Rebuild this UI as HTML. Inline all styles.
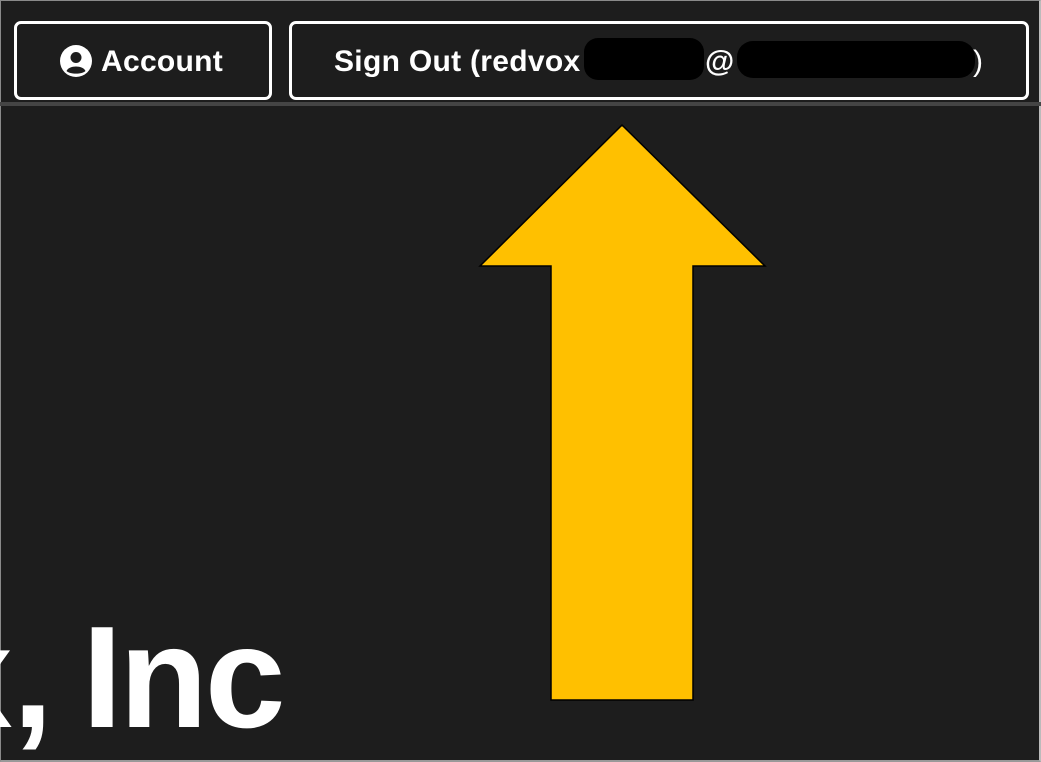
<!DOCTYPE html>
<html><head><meta charset="utf-8"><style>
html,body{margin:0;padding:0;}
body{width:1041px;height:762px;background:#1d1d1d;position:relative;overflow:hidden;font-family:"Liberation Sans",sans-serif;color:#fff;}
.frame{position:absolute;inset:0;border:1px solid #8a8a8a;border-right:2px solid #bbb;border-bottom:2px solid #999;box-sizing:border-box;}
.sep{position:absolute;left:0;right:0;top:102px;height:4px;background:#454545;}
.btn{position:absolute;top:21px;height:79px;border:3px solid #fff;border-radius:7px;box-sizing:border-box;}
.t{position:absolute;font-weight:bold;font-size:30px;top:44px;line-height:36px;white-space:nowrap;}
.blob{position:absolute;background:#000;border-radius:14px;}
.clip{position:absolute;left:0;top:0;width:1041px;height:762px;overflow:hidden;}
.big{position:absolute;font-weight:bold;font-size:145px;line-height:1;white-space:nowrap;}
</style></head><body>
<div class="frame"></div>
<div class="sep"></div>
<div class="btn" style="left:14px;width:258px;"></div>
<svg style="position:absolute;left:60px;top:45px" width="32" height="32" viewBox="0 0 32 32">
<circle cx="16" cy="16" r="16" fill="#fff"/>
<circle cx="16" cy="12.5" r="5.5" fill="#1d1d1d"/>
<path d="M6.5 26 C9 20 23 20 25.5 26 C22 29.5 10 29.5 6.5 26Z" fill="#1d1d1d"/>
</svg>
<div class="t" style="left:101px;letter-spacing:0.3px;">Account</div>
<div class="btn" style="left:289px;width:740px;"></div>
<div class="t" style="left:334px;letter-spacing:0.3px;">Sign Out (redvox</div>
<div class="blob" style="left:584px;top:38px;width:120px;height:42px;"></div>
<div class="t" style="left:705px;">@</div>
<div class="blob" style="left:737px;top:41px;width:238px;height:37px;border-radius:16px;"></div>
<div class="t" style="left:973px;font-weight:normal;">)</div>
<svg style="position:absolute;left:0;top:0" width="1041" height="762">
<polygon points="622,125 765,266 693,266 693,700 551,700 551,266 480,266" fill="#ffc000" stroke="#000" stroke-width="1.5"/>
</svg>
<div class="clip">
<div class="big" style="left:-68px;top:605px;">x,</div>
<div class="big" style="left:82px;top:605px;letter-spacing:-3px;">Inc</div>
</div>
</body></html>
